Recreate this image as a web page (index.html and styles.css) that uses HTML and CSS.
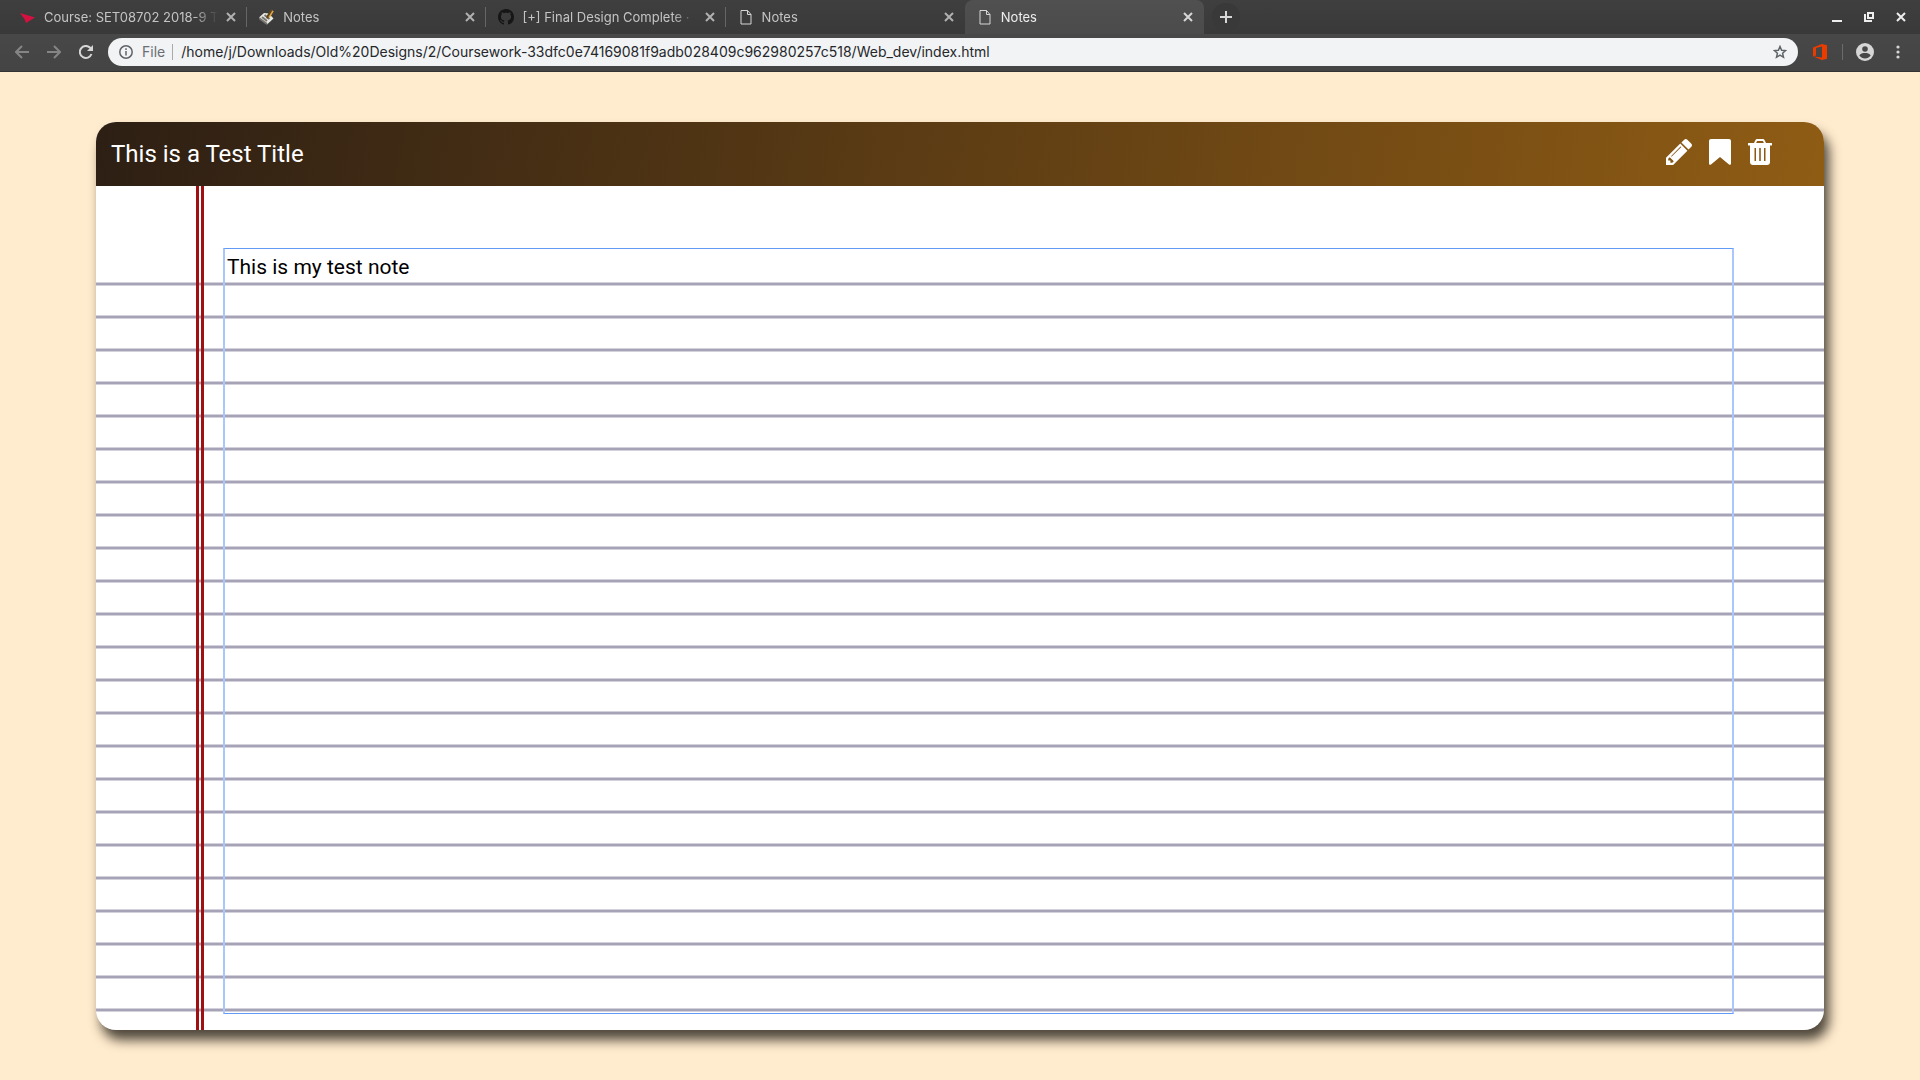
FILE: index.html
```html
<!DOCTYPE html>
<html lang="en">
<head>
<meta charset="utf-8">
<title>Notes</title>
<link rel="stylesheet" href="styles.css">
</head>
<body>
<header class="browser">
  <div class="tabstrip">
    <nav class="tabs" aria-label="Tabs">
      <div class="tab">
        <svg class="favicon" viewBox="0 0 16 16"><path fill="#d6113f" d="M0 4L15 8.500 6 14 4.500 10z"/></svg>
        <a class="tab-title" href="#">Course: SET08702 2018-9 T</a>
        <button class="tab-close" aria-label="Close tab"><svg viewBox="0 0 10 10"><path d="M1 1l8 8M9 1L1 9"/></svg></button>
      </div>
      <div class="tab">
        <svg class="favicon" viewBox="0 0 16 16"><path fill="#e9e9e4" d="M0 8.500L5 4l5 .5 4.500 5L8 15.500z"/><path fill="none" stroke="#77756f" d="M3 8l5 4M5.500 6l5 4M0 9l8 6"/><path fill="none" stroke="#e2a83b" stroke-width="3" d="M13.500 1.500L9.500 8"/><path stroke="#5c4420" d="M12.500 1L8.500 7.500v2"/></svg>
        <a class="tab-title" href="#">Notes</a>
        <button class="tab-close" aria-label="Close tab"><svg viewBox="0 0 10 10"><path d="M1 1l8 8M9 1L1 9"/></svg></button>
      </div>
      <div class="tab">
        <svg class="favicon" viewBox="0 0 16 16"><path fill="#161616" d="M8 0C3.580 0 0 3.580 0 8c0 3.540 2.290 6.530 5.470 7.590.4.070.55-.17.55-.38 0-.19-.01-.82-.01-1.490-2.010.37-2.530-.49-2.690-.94-.09-.23-.48-.94-.82-1.130-.28-.15-.68-.52-.01-.53.63-.01 1.080.58 1.230.82.72 1.210 1.870.87 2.330.66.07-.52.28-.87.51-1.070-1.780-.2-3.640-.89-3.640-3.950 0-.87.31-1.590.82-2.150-.08-.2-.36-1.020.08-2.120 0 0 .67-.21 2.200.82.64-.18 1.320-.27 2-.27s1.360.09 2 .27c1.530-1.040 2.200-.82 2.200-.82.44 1.100.16 1.920.08 2.120.51.56.82 1.270.82 2.150 0 3.070-1.870 3.750-3.650 3.950.29.25.54.73.54 1.480 0 1.070-.01 1.930-.01 2.200 0 .21.15.46.55.38A8.010 8.010 0 0 0 16 8c0-4.420-3.580-8-8-8z"/></svg>
        <a class="tab-title" href="#">[+] Final Design Complete ·</a>
        <button class="tab-close" aria-label="Close tab"><svg viewBox="0 0 10 10"><path d="M1 1l8 8M9 1L1 9"/></svg></button>
      </div>
      <div class="tab">
        <svg class="favicon" viewBox="0 0 16 16"><path class="page-icon" d="M3 1.500h6.500l3.500 4v9.500H3zM9.500 1.500v4H13"/></svg>
        <a class="tab-title" href="#">Notes</a>
        <button class="tab-close" aria-label="Close tab"><svg viewBox="0 0 10 10"><path d="M1 1l8 8M9 1L1 9"/></svg></button>
      </div>
      <div class="tab tab-active">
        <svg class="favicon" viewBox="0 0 16 16"><path class="page-icon" d="M3 1.500h6.500l3.500 4v9.500H3zM9.500 1.500v4H13"/></svg>
        <a class="tab-title" href="#" aria-current="page">Notes</a>
        <button class="tab-close" aria-label="Close tab"><svg viewBox="0 0 10 10"><path d="M1 1l8 8M9 1L1 9"/></svg></button>
      </div>
    </nav>
    <button class="new-tab" aria-label="New tab"><svg viewBox="0 0 12 12"><path d="M6 0v12M0 6h12"/></svg></button>
    <div class="window-controls">
      <button aria-label="Minimise"><svg viewBox="0 0 10 10"><path d="M0 9h10"/></svg></button>
      <button aria-label="Restore"><svg viewBox="0 0 10 10"><path d="M4 1h5v5H4zM1 2v7h7"/></svg></button>
      <button aria-label="Close window"><svg viewBox="0 0 10 10"><path d="M1 1l8 8M9 1L1 9"/></svg></button>
    </div>
  </div>
  <div class="toolbar">
    <div class="nav-buttons">
      <button class="dim" aria-label="Back"><svg viewBox="0 0 14 14"><path d="M14 7H1M7 1L1 7l6 6"/></svg></button>
      <button class="dim" aria-label="Forward"><svg viewBox="0 0 14 14"><path d="M0 7h13M7 1l6 6-6 6"/></svg></button>
      <button aria-label="Reload"><svg viewBox="0 0 14 14"><path d="M12.500 9A6 6 0 1 1 11.200 2.800L13 4.500"/><path fill="#d6d6d6" stroke="none" d="M14 0v6H8z"/></svg></button>
    </div>
    <form class="omnibox">
      <svg class="info" viewBox="0 0 14 14"><circle cx="7" cy="7" r="6.200"/><path d="M7 6v4.500M7 3.300v1.700"/></svg>
      <label class="scheme" for="address">File</label>
      <input class="address" id="address" type="text" value="/home/j/Downloads/Old%20Designs/2/Coursework-33dfc0e74169081f9adb028409c962980257c518/Web_dev/index.html">
      <button class="star" type="button" aria-label="Bookmark this page"><svg viewBox="0 0 14 14"><path d="M7 1.500l1.600 3.700 4 .4-3 2.700.9 4L7 10.200l-3.500 2.100.9-4-3-2.700 4-.4z"/></svg></button>
    </form>
    <div class="extras">
      <button class="office" aria-label="Office"><svg viewBox="0 0 14 16"><path fill="#eb3c00" d="M0 3.500L9 0l5 1.200v13.600L9 16 0 12.600l9 1V2.600L3 4v7.400l-3 1.200z"/></svg></button>
      <span class="divider"></span>
      <button class="profile" aria-label="Profile"><svg viewBox="0 0 18 18"><circle cx="9" cy="9" r="9" fill="#d6d6d6"/><circle cx="9" cy="6" r="2.800" fill="#484848"/><path fill="#484848" d="M3.300 12.500c1-2 3.500-2.500 5.700-2.500s4.700.5 5.700 2.500c-3 4-8.400 4-11.400 0z"/></svg></button>
      <button class="menu" aria-label="Menu"><svg viewBox="0 0 4 14"><g fill="#d6d6d6"><circle cx="2" cy="2" r="1.600"/><circle cx="2" cy="7" r="1.600"/><circle cx="2" cy="12" r="1.600"/></g></svg></button>
    </div>
  </div>
</header>

<main class="page">
  <article class="note">
    <header class="note-header">
      <h1 class="note-title">This is a Test Title</h1>
      <div class="note-actions">
        <button aria-label="Edit"><svg viewBox="128 149 1515 1515"><path d="M491 1536l91-91-235-235-91 91v107h128v128h107zm523-928q0-22-22-22-10 0-17 7l-542 542q-7 7-7 17 0 22 22 22 10 0 17-7l542-542q7-7 7-17zm-54-192l416 416-832 832h-416v-416zm683 96q0 53-37 90l-166 166-416-416 166-165q36-38 90-38 53 0 91 38l235 234q37 39 37 91z"/></svg></button>
        <button aria-label="Bookmark"><svg viewBox="0 0 22 26"><path d="M2 0h18q2 0 2 2v22.500q0 2-2 1L11 18l-9 7.500q-2 1-2-1V2q0-2 2-2z"/></svg></button>
        <button aria-label="Delete"><svg viewBox="0 0 24 26"><path fill-rule="evenodd" d="M.5 4H6l1.500-3Q8 0 9 0h6q1 0 1.500 1L18 4h5.500q.5 0 .5.500v1.500q0 .5-.5.500H22V23q0 3-3 3H5q-3 0-3-3V6.500H.500Q0 6.500 0 6V4.500Q0 4 .5 4zM8.200 4h7.600L15 2H9zM6.500 9v13H8V9zM11.200 9v13h1.600V9zM16 9v13h1.500V9z"/></svg></button>
      </div>
    </header>
    <div class="paper">
      <textarea class="note-text" rows="23" aria-label="Note" spellcheck="false">This is my test note</textarea>
    </div>
  </article>
</main>
</body>
</html>
```
FILE: styles.css
```css
* {
  box-sizing: border-box;
}

body {
  margin: 0;
  min-height: 100vh;
  background: #ffebcd;
  font-family: Roboto, "Liberation Sans", sans-serif;
}

button {
  display: flex;
  align-items: center;
  justify-content: center;
  padding: 0;
  border: 0;
  background: none;
}

svg {
  display: block;
}

/* Browser window */

.browser {
  background: linear-gradient(#4b4b4b, #444);
  border-bottom: 1px solid #333431;
  font-family: Inter, sans-serif;
}

.browser svg {
  fill: none;
  stroke: #d6d6d6;
  stroke-width: 2;
}

.tabstrip {
  display: flex;
  align-items: center;
  height: 34px;
  padding-left: 8px;
  background: linear-gradient(#3f3f3f, #393939);
}

.tabs {
  display: flex;
  flex: 0 1 1196px;
  height: 100%;
}

.tab {
  display: flex;
  flex: 1 1 0;
  align-items: center;
  min-width: 0;
  padding: 0 11px 0 12px;
  background: linear-gradient(90deg, #666, #666) right / 1px 20px no-repeat;
}

.tab:nth-child(4) {
  background: none;
}

.tab-active {
  border-radius: 8px 8px 0 0;
  background: linear-gradient(#505050, #4b4b4b);
}

.browser .favicon {
  flex: none;
  width: 16px;
  height: 16px;
  stroke: none;
}

.browser .page-icon {
  stroke: #d6d6d6;
  stroke-width: 1;
}

.tab-title {
  flex: 1;
  margin: 0 8px;
  overflow: hidden;
  color: #c4c4c4;
  font-size: 13px;
  line-height: 20px;
  text-decoration: none;
  white-space: nowrap;
  -webkit-mask-image: linear-gradient(90deg, #000 calc(100% - 24px), transparent);
  mask-image: linear-gradient(90deg, #000 calc(100% - 24px), transparent);
}

.tab-active .tab-title {
  color: #eee;
}

.tab-close svg {
  width: 10px;
  height: 10px;
  stroke: #b0b0b0;
}

.tab-active .tab-close svg {
  stroke: #d6d6d6;
}

.new-tab {
  width: 28px;
  height: 28px;
  margin-left: 8px;
  border-radius: 50%;
  background: #393939;
}

.new-tab svg {
  width: 12px;
  height: 12px;
}

.window-controls {
  display: flex;
  gap: 22px;
  margin-left: auto;
  padding-right: 14px;
}

.window-controls svg {
  width: 10px;
  height: 10px;
  stroke: #eee;
}

.toolbar {
  display: flex;
  align-items: center;
  height: 37px;
  padding: 4px 20px 5px 15px;
}

.nav-buttons {
  display: flex;
  gap: 18px;
  margin-right: 15px;
}

.nav-buttons svg {
  width: 14px;
  height: 14px;
}

.nav-buttons .dim svg {
  stroke: #858585;
}

.omnibox {
  display: flex;
  flex: 1;
  align-items: center;
  height: 28px;
  margin: 0;
  padding: 0 11px;
  border-radius: 14px;
  background: #f1f3f4;
}

.browser .info {
  width: 14px;
  height: 14px;
  stroke: #5f6368;
  stroke-width: 1.5;
}

.scheme {
  margin-left: 9px;
  padding-right: 7px;
  border-right: 1px solid #aaa;
  color: #6b6f74;
  font-size: 14px;
  line-height: 16px;
}

.address {
  flex: 1;
  min-width: 0;
  padding: 0 0 0 8px;
  border: 0;
  outline: 0;
  background: none;
  color: #25272a;
  font-family: inherit;
  font-size: 14px;
  line-height: 20px;
}

.browser .star svg {
  width: 14px;
  height: 14px;
  stroke: #5f6368;
  stroke-width: 1.5;
}

.extras {
  display: flex;
  align-items: center;
  margin-left: 15px;
}

.extras svg {
  stroke: none;
}

.office svg {
  width: 14px;
  height: 16px;
}

.divider {
  width: 1px;
  height: 16px;
  margin: 0 13px 0 15px;
  background: #6b6b6b;
}

.profile svg {
  width: 18px;
  height: 18px;
}

.menu {
  margin-left: 22px;
}

.menu svg {
  width: 4px;
  height: 14px;
}

/* Note */

.page {
  padding: 50px 5%;
}

.note {
  border-radius: 20px;
  background: #fff;
  box-shadow: 5px 10px 12px #50483c;
}

.note-header {
  display: flex;
  align-items: center;
  justify-content: space-between;
  height: 64px;
  padding: 0 52px 0 15px;
  border-radius: 20px 20px 0 0;
  background: linear-gradient(100deg, #2d1f14, #8f5c14);
}

.note-title {
  margin: 0;
  color: #fff;
  font-size: 24px;
  font-weight: 400;
  line-height: 32px;
}

.note-actions {
  display: flex;
  gap: 17px;
  padding-bottom: 4px;
}

.note-actions svg {
  height: 26px;
  fill: #fff;
}

.paper {
  padding: 62px 90px 16px 127px;
  border-radius: 0 0 20px 20px;
  background:
    linear-gradient(90deg, #a01013 3px, transparent 3px 5px, #a01013 5px) 100px 0 / 8px 100% no-repeat,
    repeating-linear-gradient(#d3d2dc 0 1px, #a5a3b5 1px 3px, #d3d2dc 3px 4px, transparent 4px 33px) 0 96px / 100% 100% no-repeat;
}

.note-text {
  display: block;
  width: 100%;
  padding: 2px 2px 3px;
  border: solid;
  border-width: 1px 2px;
  border-color: #639af5 #a9c7fc;
  outline: 0;
  background: none;
  color: #000;
  font-family: inherit;
  font-size: 21px;
  line-height: 33px;
  resize: none;
}
```
